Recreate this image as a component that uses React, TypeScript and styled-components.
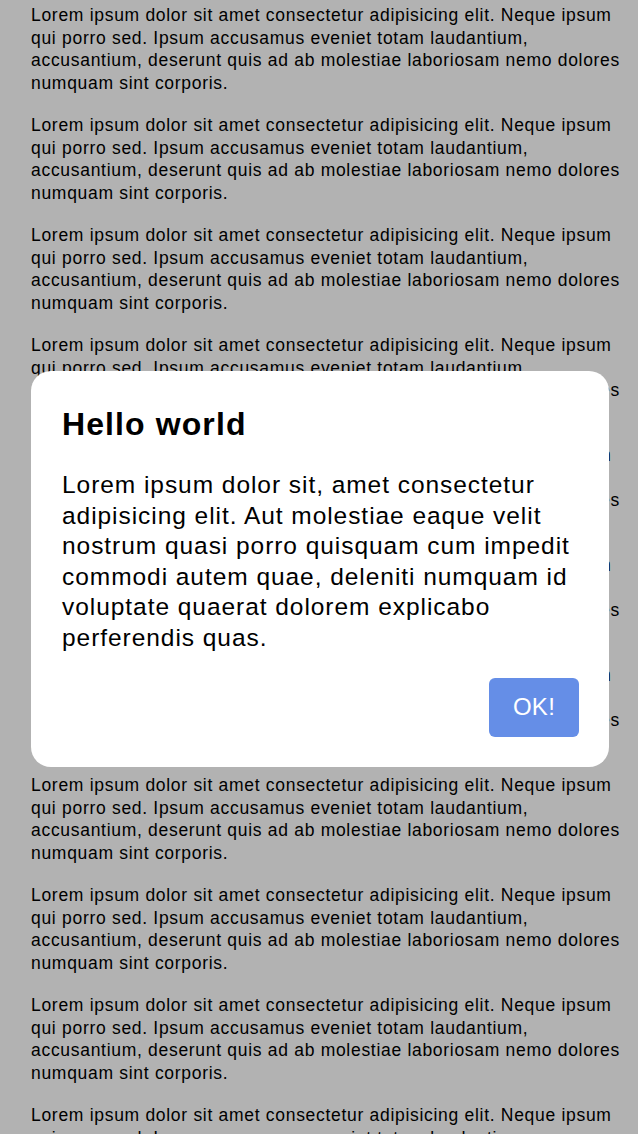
import React from "react";
import styled, { createGlobalStyle } from "styled-components";

const GlobalStyle = createGlobalStyle`
  html, body {
    margin: 0;
    padding: 0;
    background: #ffffff;
    font-family: "Liberation Sans", Arial, Helvetica, sans-serif;
    color: #000;
  }
`;

const Page = styled.main`
  padding: 4px 6px 0 31px;
`;

const Paragraph = styled.p`
  margin: 0 0 20px;
  font-size: 17.5px;
  line-height: 22.5px;
  letter-spacing: 0.7px;
`;

const Backdrop = styled.div`
  position: fixed;
  inset: 0;
  background: rgba(0, 0, 0, 0.3);
`;

const Dialog = styled.div`
  position: absolute;
  top: 371px;
  left: 31px;
  width: 578px;
  box-sizing: border-box;
  padding: 35px 31px 30px;
  background: #ffffff;
  border-radius: 20px;
  display: flex;
  flex-direction: column;
`;

const Title = styled.h2`
  margin: 0;
  font-size: 32px;
  line-height: 36px;
  font-weight: 700;
  letter-spacing: 1.1px;
`;

const Body = styled.p`
  margin: 28px 0 24px;
  font-size: 24.5px;
  line-height: 30.6px;
  letter-spacing: 0.95px;
`;

const Actions = styled.div`
  display: flex;
  justify-content: flex-end;
  margin-right: -1px;
`;

const OkButton = styled.button`
  width: 90px;
  height: 59px;
  border: none;
  border-radius: 6px;
  background: #658ee7;
  color: #ffffff;
  font-family: inherit;
  font-size: 24px;
  letter-spacing: 0.3px;
  display: flex;
  align-items: center;
  justify-content: center;
  padding: 0;
  cursor: pointer;
`;

const LOREM =
  "Lorem ipsum dolor sit amet consectetur adipisicing elit. Neque ipsum qui porro sed. Ipsum accusamus eveniet totam laudantium, accusantium, deserunt quis ad ab molestiae laboriosam nemo dolores numquam sint corporis.";

export default function App() {
  const paragraphs = Array.from({ length: 11 }, (_, i) => i);

  return (
    <>
      <GlobalStyle />
      <Page>
        {paragraphs.map((i) => (
          <Paragraph key={i}>{LOREM}</Paragraph>
        ))}
      </Page>
      <Backdrop>
        <Dialog role="dialog" aria-modal="true">
          <Title>Hello world</Title>
          <Body>
            Lorem ipsum dolor sit, amet consectetur adipisicing elit. Aut
            molestiae eaque velit nostrum quasi porro quisquam cum impedit
            commodi autem quae, deleniti numquam id voluptate quaerat dolorem
            explicabo perferendis quas.
          </Body>
          <Actions>
            <OkButton>OK!</OkButton>
          </Actions>
        </Dialog>
      </Backdrop>
    </>
  );
}
